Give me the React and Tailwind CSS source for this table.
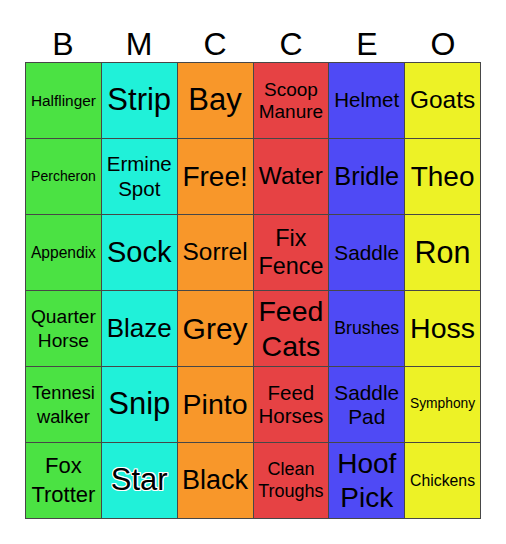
import React from "react";

const letters = ["B", "M", "C", "C", "E", "O"];

// column colours, left to right
const colors = [
  "bg-[#4be243]",
  "bg-[#20f1d9]",
  "bg-[#f8972a]",
  "bg-[#e64244]",
  "bg-[#4f4af5]",
  "bg-[#edf226]",
];

// each row lists the cells with their own fitted text size
const rows = [
  [
    ["Halflinger", "text-[15.4px]"],
    ["Strip", "text-[31px]"],
    ["Bay", "text-[31px]"],
    ["Scoop Manure", "text-[19px] leading-[1.12]"],
    ["Helmet", "text-[20.5px]"],
    ["Goats", "text-[24.4px]"],
  ],
  [
    ["Percheron", "text-[14px]"],
    ["Ermine Spot", "text-[20.5px] leading-[1.2]"],
    ["Free!", "text-[28px]"],
    ["Water", "text-[24.4px]"],
    ["Bridle", "text-[25.4px]"],
    ["Theo", "text-[28px]"],
  ],
  [
    ["Appendix", "text-[15.6px]"],
    ["Sock", "text-[29px]"],
    ["Sorrel", "text-[24.4px]"],
    ["Fix Fence", "text-[23.4px] leading-[1.16]"],
    ["Saddle", "text-[20.8px]"],
    ["Ron", "text-[30.5px]"],
  ],
  [
    ["Quarter Horse", "text-[19.2px] leading-[1.25]"],
    ["Blaze", "text-[26px]"],
    ["Grey", "text-[30px]"],
    ["Feed Cats", "text-[28.5px] leading-[1.22]"],
    ["Brushes", "text-[17.7px]"],
    ["Hoss", "text-[28.5px]"],
  ],
  [
    ["Tennesi walker", "text-[18.3px] leading-[1.3]"],
    ["Snip", "text-[31px]"],
    ["Pinto", "text-[28.5px]"],
    ["Feed Horses", "text-[20.5px] leading-[1.08]"],
    ["Saddle Pad", "text-[20.8px] leading-[1.15]"],
    ["Symphony", "text-[13.8px]"],
  ],
  [
    ["Fox Trotter", "text-[22px] leading-[1.3]"],
    ["Star", "text-[31px] [text-shadow:1px_0_0_#fff,-1px_0_0_#fff,0_1px_0_#fff,0_-1px_0_#fff,1px_1px_0_#fff,-1px_-1px_0_#fff,1px_-1px_0_#fff,-1px_1px_0_#fff]"],
    ["Black", "text-[27px]"],
    ["Clean Troughs", "text-[18px] leading-[1.22]"],
    ["Hoof Pick", "text-[28px] leading-[1.2]"],
    ["Chickens", "text-[15.8px]"],
  ],
];

const Cell = ({ text, size, color }) => {
  const lines = text.split(" ");
  return (
    <div
      className={`${color} h-[76px] flex flex-col items-center justify-center border-r border-b border-[#474747] text-black text-center ${size}`}
    >
      {lines.length > 1 && !["Halflinger"].includes(text) ? (
        lines.map((w) => <span key={w}>{w}</span>)
      ) : (
        <span>{text}</span>
      )}
    </div>
  );
};

export default function App() {
  return (
    <div className="w-[506px] h-[544px] bg-white font-['Liberation_Sans',Arial,sans-serif]">
      <div className="ml-[25px] w-[456px] pt-[26px]">
        <div className="grid grid-cols-6 h-[36px] text-[32px] leading-[36px] text-black text-center">
          {letters.map((l, i) => (
            <div key={i}>{l}</div>
          ))}
        </div>
        <div className="grid grid-cols-6 border-l border-t border-[#474747]">
          {rows.map((row, r) =>
            row.map(([text, size], c) => (
              <Cell key={`${r}-${c}`} text={text} size={size} color={colors[c]} />
            ))
          )}
        </div>
      </div>
    </div>
  );
}
